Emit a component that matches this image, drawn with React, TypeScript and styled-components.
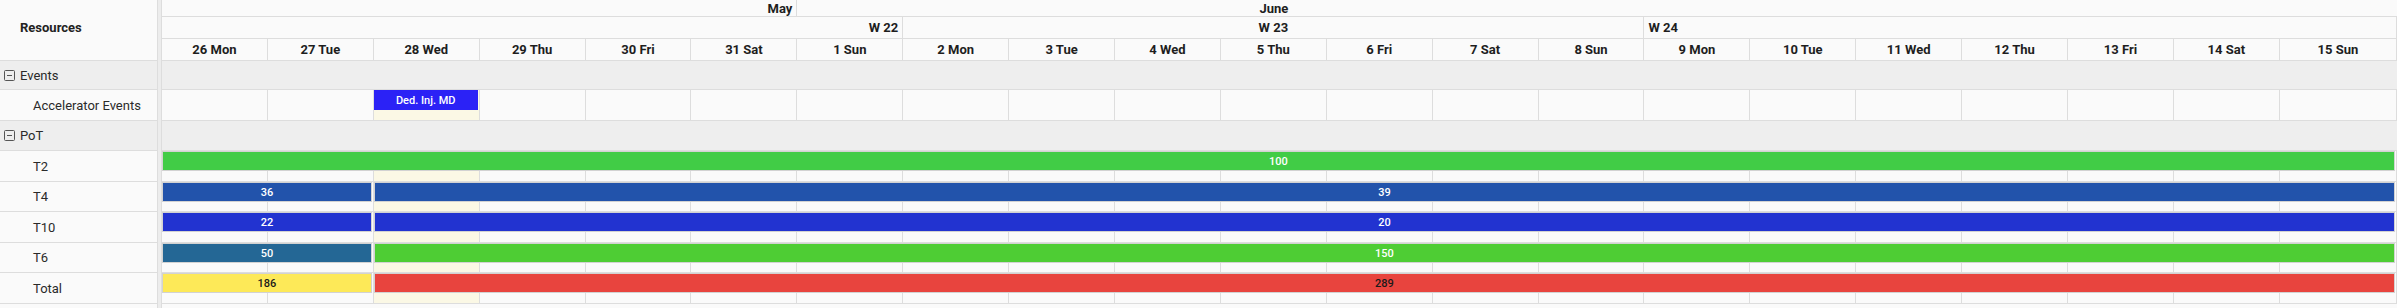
import React from 'react';
import styled, { createGlobalStyle } from 'styled-components';

const LINE = '#dddddd';
const TODAY = 2;
// the scheduler gives every day the same width and lets the last one take the rest
const COLUMNS = 'repeat(20, 105.9px) 1fr';

const GlobalStyle = createGlobalStyle`
  html, body {
    margin: 0;
    padding: 0;
    background: #fafafa;
    font-family: Roboto, 'Liberation Sans', sans-serif;
    color: #222;
  }
  * {
    box-sizing: border-box;
  }
`;

const days = [
  '26 Mon', '27 Tue', '28 Wed', '29 Thu', '30 Fri', '31 Sat', '1 Sun',
  '2 Mon', '3 Tue', '4 Wed', '5 Thu', '6 Fri', '7 Sat', '8 Sun',
  '9 Mon', '10 Tue', '11 Wed', '12 Thu', '13 Fri', '14 Sat', '15 Sun',
];

type Segment = { from: number; to: number; label: string; color: string; dark?: boolean };
type Row = { name: string; group?: boolean; height: number; bars?: Segment[]; event?: boolean };

const rows: Row[] = [
  { name: 'Events', group: true, height: 29 },
  {
    name: 'Accelerator Events',
    height: 31,
    event: true,
    bars: [{ from: 3, to: 4, label: 'Ded. Inj. MD', color: '#2b22f6' }],
  },
  { name: 'PoT', group: true, height: 30 },
  { name: 'T2', height: 31, bars: [{ from: 1, to: 22, label: '100', color: '#41cc46' }] },
  {
    name: 'T4',
    height: 30,
    bars: [
      { from: 1, to: 3, label: '36', color: '#2253ab' },
      { from: 3, to: 22, label: '39', color: '#2253ab' },
    ],
  },
  {
    name: 'T10',
    height: 31,
    bars: [
      { from: 1, to: 3, label: '22', color: '#2233d0' },
      { from: 3, to: 22, label: '20', color: '#2233d0' },
    ],
  },
  {
    name: 'T6',
    height: 30,
    bars: [
      { from: 1, to: 3, label: '50', color: '#246795' },
      { from: 3, to: 22, label: '150', color: '#4ecd34' },
    ],
  },
  {
    name: 'Total',
    height: 31,
    bars: [
      { from: 1, to: 3, label: '186', color: '#fde958', dark: true },
      { from: 3, to: 22, label: '289', color: '#e8443e', dark: true },
    ],
  },
];

const Scheduler = styled.div`
  display: flex;
  width: 2397px;
  height: 308px;
  background: #fafafa;
  overflow: hidden;
`;

const ResourcePane = styled.div`
  width: 158px;
  flex: none;
  border-right: 1px solid ${LINE};
`;

const Splitter = styled.div`
  width: 3px;
  flex: none;
  background: #ececec;
`;

const TimelinePane = styled.div`
  flex: 1;
  min-width: 0;
  border-left: 1px solid ${LINE};
`;

const ResourceHeader = styled.div`
  height: 61px;
  display: flex;
  align-items: center;
  padding: 0 0 6px 20px;
  border-bottom: 1px solid ${LINE};
  font-weight: 700;
  font-size: 13px;
`;

const ResourceCell = styled.div<{ $group?: boolean; $h: number }>`
  height: ${(p) => p.$h}px;
  display: flex;
  align-items: center;
  gap: 5px;
  padding-left: ${(p) => (p.$group ? 4 : 33)}px;
  background: ${(p) => (p.$group ? '#eeeeee' : '#fafafa')};
  border-bottom: 1px solid ${LINE};
  font-size: 13px;
  color: #2a2a2a;
`;

const HeaderRow = styled.div<{ $h: number }>`
  height: ${(p) => p.$h}px;
  display: grid;
  grid-template-columns: ${COLUMNS};
  border-bottom: 1px solid ${LINE};
  font-weight: 700;
  font-size: 13px;
  color: #1e1e1e;
`;

const HeaderCell = styled.div<{ $span: string; $align?: 'left' | 'right' | 'center'; $border?: boolean }>`
  grid-column: ${(p) => p.$span};
  grid-row: 1;
  display: flex;
  align-items: center;
  justify-content: ${(p) =>
    p.$align === 'left' ? 'flex-start' : p.$align === 'right' ? 'flex-end' : 'center'};
  padding: 0 4px;
  border-right: ${(p) => (p.$border === false ? 'none' : `1px solid ${LINE}`)};
  white-space: nowrap;
  overflow: hidden;
`;

const GroupLane = styled.div<{ $h: number }>`
  height: ${(p) => p.$h}px;
  background: #eeeeee;
  border-bottom: 1px solid ${LINE};
`;

const Lane = styled.div<{ $h: number }>`
  height: ${(p) => p.$h}px;
  display: grid;
  grid-template-columns: ${COLUMNS};
  grid-template-rows: 20px 1fr;
  border-bottom: 1px solid ${LINE};
`;

const DayCell = styled.div<{ $today?: boolean }>`
  grid-row: 1 / 3;
  border-right: 1px solid ${LINE};
  background: ${(p) => (p.$today ? '#fbf8e5' : 'transparent')};
`;

const Bar = styled.div<{ $color: string; $dark?: boolean; $event?: boolean }>`
  grid-row: 1;
  z-index: 1;
  margin-right: 2px;
  display: flex;
  align-items: center;
  justify-content: center;
  background: ${(p) => p.$color};
  border: ${(p) => (p.$event ? 'none' : '1px solid #d2d2d2')};
  color: ${(p) => (p.$dark ? '#1a1a1a' : '#ffffff')};
  font-size: 11px;
  font-weight: 500;
  white-space: nowrap;
  overflow: hidden;
`;

const CollapseIcon = () => (
  <svg width="11" height="11" viewBox="0 0 11 11">
    <rect x="0.5" y="0.5" width="10" height="10" rx="1" fill="none" stroke="#555" />
    <line x1="3" y1="5.5" x2="8" y2="5.5" stroke="#555" />
  </svg>
);

export default function App() {
  return (
    <>
      <GlobalStyle />
      <Scheduler>
        <ResourcePane>
          <ResourceHeader>Resources</ResourceHeader>
          {rows.map((r) => (
            <ResourceCell key={r.name} $group={r.group} $h={r.height}>
              {r.group && <CollapseIcon />}
              {r.name}
            </ResourceCell>
          ))}
        </ResourcePane>
        <Splitter />
        <TimelinePane>
          <HeaderRow $h={17}>
            <HeaderCell $span="1 / 7" $align="right">May</HeaderCell>
            <HeaderCell $span="7 / 22" $border={false} />
            <HeaderCell $span="8 / 15" $border={false}>June</HeaderCell>
          </HeaderRow>
          <HeaderRow $h={22}>
            <HeaderCell $span="1 / 8" $align="right">W 22</HeaderCell>
            <HeaderCell $span="8 / 15">W 23</HeaderCell>
            <HeaderCell $span="15 / 22" $align="left">W 24</HeaderCell>
          </HeaderRow>
          <HeaderRow $h={22}>
            {days.map((d, i) => (
              <HeaderCell key={d} $span={`${i + 1} / ${i + 2}`}>{d}</HeaderCell>
            ))}
          </HeaderRow>
          {rows.map((r) =>
            r.group ? (
              <GroupLane key={r.name} $h={r.height} />
            ) : (
              <Lane key={r.name} $h={r.height}>
                {days.map((d, i) => (
                  <DayCell key={d} $today={i === TODAY} style={{ gridColumn: i + 1 }} />
                ))}
                {r.bars?.map((b) => (
                  <Bar
                    key={b.label}
                    $color={b.color}
                    $dark={b.dark}
                    $event={r.event}
                    style={{ gridColumn: `${b.from} / ${b.to}` }}
                  >
                    {b.label}
                  </Bar>
                ))}
              </Lane>
            )
          )}
        </TimelinePane>
      </Scheduler>
    </>
  );
}
